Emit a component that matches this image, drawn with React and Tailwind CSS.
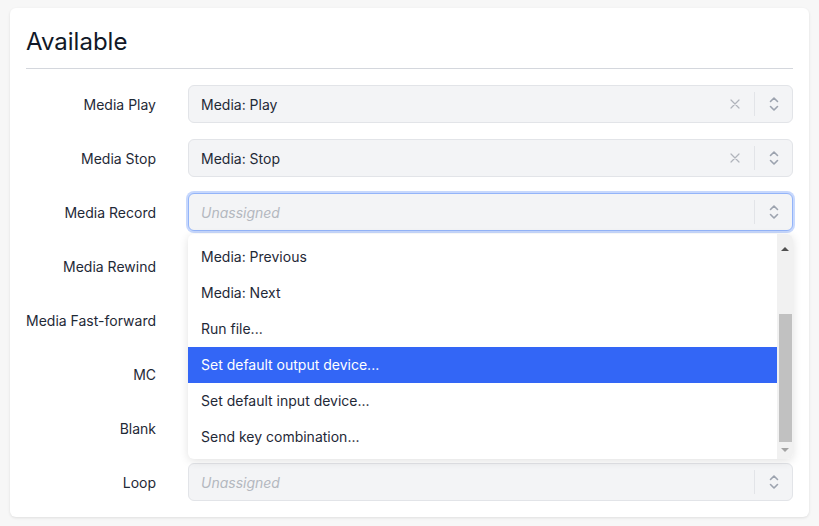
import React from 'react';

const rows = [
  { label: 'Media Play', value: 'Media: Play' },
  { label: 'Media Stop', value: 'Media: Stop' },
  { label: 'Media Record', value: null, open: true },
  { label: 'Media Rewind', value: null },
  { label: 'Media Fast-forward', value: null },
  { label: 'MC', value: null },
  { label: 'Blank', value: null },
  { label: 'Loop', value: null },
];

const options = [
  'Media: Previous',
  'Media: Next',
  'Run file...',
  'Set default output device...',
  'Set default input device...',
  'Send key combination...',
];

function Chevrons() {
  return (
    <svg width="12" height="16" viewBox="0 0 12 16" fill="none" stroke="#9ca3af" strokeWidth="1.6" strokeLinecap="round" strokeLinejoin="round">
      <path d="M2.5 5.5 6 2l3.5 3.5" />
      <path d="M2.5 10.5 6 14l3.5-3.5" />
    </svg>
  );
}

function Cross() {
  return (
    <svg width="10" height="10" viewBox="0 0 10 10" stroke="#b0b4bb" strokeWidth="1.2" strokeLinecap="round">
      <path d="M1 1l8 8M9 1l-8 8" />
    </svg>
  );
}

function Menu() {
  return (
    <div className="absolute left-0 right-0 top-full mt-[3px] z-10 flex h-[225px] overflow-hidden rounded-md bg-white shadow-[0_2px_10px_rgba(0,0,0,0.12)]">
      <div className="flex-1 py-[5px]">
        {options.map((o, i) => (
          <div
            key={o}
            className={`flex h-9 items-center px-[13px] text-sm ${i === 3 ? 'bg-[#3366f6] text-white' : 'text-[#1f2937]'}`}
          >
            {o}
          </div>
        ))}
      </div>
      <div className="flex w-4 flex-col items-center bg-[#f1f1f1]">
        <div className="flex h-[17px] items-end justify-center">
          <div className="h-0 w-0 border-x-[4px] border-b-[4px] border-x-transparent border-b-[#505050]" />
        </div>
        <div className="mt-[63px] h-[128px] w-[13px] bg-[#c1c1c1]" />
        <div className="mt-[6px] flex justify-center">
          <div className="h-0 w-0 border-x-[4px] border-t-[4px] border-x-transparent border-t-[#a3a3a3]" />
        </div>
      </div>
    </div>
  );
}

function Select({ value, open }) {
  return (
    <div className="relative flex-1">
      <div
        className={`flex h-[38px] items-center rounded-md border bg-[#f3f4f6] ${open ? 'border-[#93b4f9] ring-2 ring-[#c7d8fd]' : 'border-[#e2e4e8]'}`}
      >
        <div className="flex-1 px-3 pt-px text-sm">
          {value ? (
            <span className="text-[#1f2937]">{value}</span>
          ) : (
            <span className="italic text-[#b4b8bf]">Unassigned</span>
          )}
        </div>
        {value && (
          <div className="flex w-5 justify-center">
            <Cross />
          </div>
        )}
        <div className="ml-[9px] h-[24px] w-px bg-[#e2e4e8]" />
        <div className="flex w-[37px] justify-center">
          <Chevrons />
        </div>
      </div>
      {open && <Menu />}
    </div>
  );
}

export default function App() {
  return (
    <div className="min-h-screen bg-[#f7f7f7] p-[8px_10px] font-['Inter',sans-serif]">
      <div className="rounded-md bg-white px-4 pb-4 pt-[18px] shadow-[0_1px_3px_rgba(0,0,0,0.1)]">
        <h2 className="h-8 text-2xl leading-8 text-[#111827]">Available</h2>
        <div className="mt-[10px] border-t border-[#d4d7dd]" />
        <div className="mt-4 flex flex-col gap-4">
          {rows.map((r) => (
            <div key={r.label} className="flex items-center gap-8">
              <div className="w-[130px] pt-px text-right text-sm text-[#1f2937]">{r.label}</div>
              <Select value={r.value} open={r.open} />
            </div>
          ))}
        </div>
      </div>
    </div>
  );
}
